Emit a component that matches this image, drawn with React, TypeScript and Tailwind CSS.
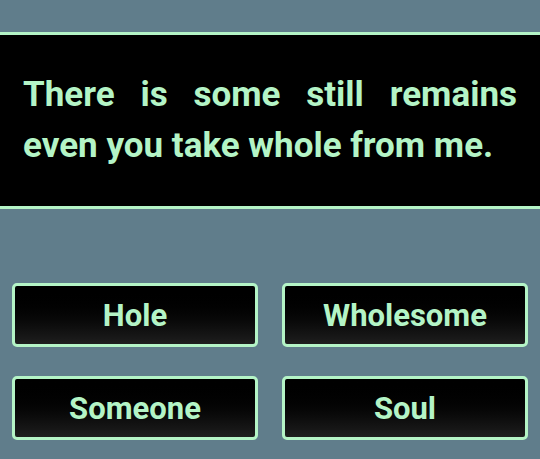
export default function App() {
  const opts = ["Hole", "Wholesome", "Someone", "Soul"];
  return (
    <div
      className="w-[540px] h-[459px] bg-[#607d8b] flex flex-col"
      style={{ fontFamily: "Roboto, 'Liberation Sans', sans-serif" }}
    >
      <div className="mt-[32px] bg-black border-y-[3px] border-[#b4f4c6] px-[23px] pt-[34px] pb-[35px]">
        <p className="text-[35px] leading-[51px] font-bold text-[#b4f4c6] text-justify">
          There is some still remains even you take whole from me.
        </p>
      </div>
      <div className="mt-[74px] px-[12px] grid grid-cols-2 gap-x-[24px] gap-y-[29px]">
        {opts.map((o) => (
          <button
            key={o}
            className="h-[64px] rounded-[5px] border-[3px] border-[#b4f4c6] bg-gradient-to-b from-black to-[#1e1e1e] text-[31px] leading-none font-bold text-[#b4f4c6] flex items-center justify-center"
          >
            {o}
          </button>
        ))}
      </div>
    </div>
  );
}
